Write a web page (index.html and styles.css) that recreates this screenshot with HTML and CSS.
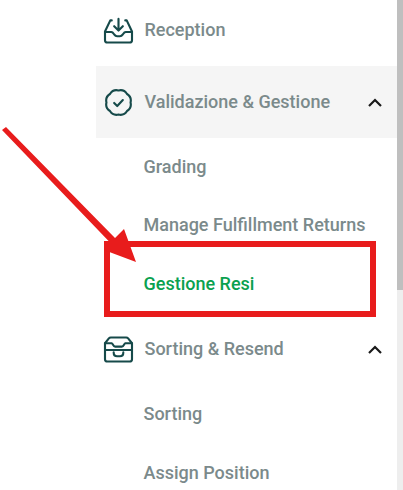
FILE: index.html
```html
<html>
<head>
  <title>Menu</title>
  <link rel="stylesheet" href="styles.css">
</head>
<body>
  <div class="page">
    <!-- Sidebar menu -->
    <nav class="menu">
      <div class="menu-row">
        <svg class="menu-icon" viewBox="0 0 32 28" fill="none" stroke="#164a4a" stroke-width="2.200" stroke-linecap="round" stroke-linejoin="round">
          <path d="M9 3.500H7.500L2 15v9a2.500 2.500 0 0 0 2.500 2.500h23A2.500 2.500 0 0 0 30 24v-9L24.500 3.500H23"/>
          <path d="M2 15.500h6.500c1.500 0 2 1 3 2.500s1.500 2 3 2h3c1.500 0 2-.5 3-2s1.500-2.500 3-2.500H30"/>
          <path d="M16 2v11.500M11.500 9.500l4.500 4.500 4.500-4.500"/>
        </svg>
        <span class="menu-label">Reception</span>
      </div>
      <div class="menu-row menu-row-open">
        <svg class="menu-icon" viewBox="0 0 32 28" fill="none" stroke="#164a4a" stroke-width="2.200" stroke-linecap="round" stroke-linejoin="round">
          <path d="M28.500 14Q29.860 19.740 24.840 22.840 21.740 27.860 16 26.500 10.260 27.860 7.160 22.840 2.140 19.740 3.500 14 2.140 8.260 7.160 5.160 10.260.140 16 1.500 21.740.140 24.840 5.160 29.860 8.260 28.500 14z"/>
          <path d="M11.500 14.500l3.200 3.200 5.800-6.200"/>
        </svg>
        <span class="menu-label">Validazione &amp; Gestione</span>
        <svg class="chevron" viewBox="0 0 14 9" fill="none" stroke="#1a1a1a" stroke-width="2.200"><path d="M1 8l6-6 6 6"/></svg>
      </div>
      <a class="submenu-item">Grading</a>
      <a class="submenu-item">Manage Fulfillment Returns</a>
      <a class="submenu-item submenu-item-active">Gestione Resi</a>
      <div class="menu-row">
        <svg class="menu-icon" viewBox="0 0 32 28" fill="none" stroke="#164a4a" stroke-width="2.200" stroke-linecap="round" stroke-linejoin="round">
          <path d="M2 14V7.500L6 2.500c.5-.6 1-1 2-1h16c1 0 1.500.4 2 1l4 5V14M2 14v10a2.500 2.500 0 0 0 2.500 2.500h23A2.500 2.500 0 0 0 30 24V14"/>
          <path d="M2 7.500h7c1 0 1.500 3.500 3.500 3.500h7c2 0 2.500-3.500 3.500-3.500h7"/>
          <path d="M2 14.500h28"/>
          <path d="M11 17c0 2.500 1.500 4 3.500 4h3c2 0 3.500-1.500 3.500-4"/>
        </svg>
        <span class="menu-label">Sorting &amp; Resend</span>
        <svg class="chevron" viewBox="0 0 14 9" fill="none" stroke="#1a1a1a" stroke-width="2.200"><path d="M1 8l6-6 6 6"/></svg>
      </div>
      <a class="submenu-item">Sorting</a>
      <a class="submenu-item">Assign Position</a>
    </nav>
    <div class="scrollbar"><div class="scrollbar-thumb"></div></div>

    <!-- Annotation drawn over the screenshot -->
    <div class="callout-box"></div>
    <svg class="callout-arrow" viewBox="0 0 140 150" fill="#e81c1c">
      <path d="M2 10L6 7 115 118 124 109 136 142 104 130 110.500 123z"/>
    </svg>
  </div>
</body>
</html>
```

FILE: styles.css
```css
body {
  margin: 0;
  overflow: hidden;
  background-color: white;
  font-family: Roboto, sans-serif;
}
.page {
  position: relative;
  display: flex;
  height: 490px;
  overflow: hidden;
}
.menu {
  display: flex;
  flex-direction: column;
  flex-shrink: 0;
  width: 301px;
  margin-top: -6px;
  margin-left: 96px;
}
.menu-row {
  display: flex;
  flex-shrink: 0;
  align-items: center;
  height: 72px;
  padding-left: 7px;
  box-sizing: border-box;
}
.menu-row-open {
  background-color: #f5f5f5;
}
.menu-icon {
  flex-shrink: 0;
  width: 31px;
  height: 27px;
  margin-right: 10.500px;
}
.menu-label {
  flex-grow: 1;
  padding-bottom: 2px;
  font-size: 18px;
  font-weight: 500;
  color: #7b8a8b;
}
.chevron {
  flex-shrink: 0;
  width: 14px;
  height: 9px;
  margin-right: 15px;
}
.submenu-item {
  display: flex;
  flex-shrink: 0;
  align-items: center;
  height: 58.500px;
  padding-left: 47.500px;
  padding-bottom: 2px;
  box-sizing: border-box;
  font-size: 18px;
  font-weight: 500;
  color: #7b8a8b;
}
.submenu-item-active {
  color: #0aa14f;
}
.scrollbar {
  flex-grow: 1;
  background-color: #eeeeee;
}
.scrollbar-thumb {
  height: 290px;
  background-color: #bfbfbf;
}
.callout-box {
  position: absolute;
  top: 241px;
  left: 104px;
  width: 260px;
  height: 64px;
  border: 6px solid #e81c1c;
}
.callout-arrow {
  position: absolute;
  top: 120px;
  left: 0;
  width: 140px;
  height: 150px;
}
```
